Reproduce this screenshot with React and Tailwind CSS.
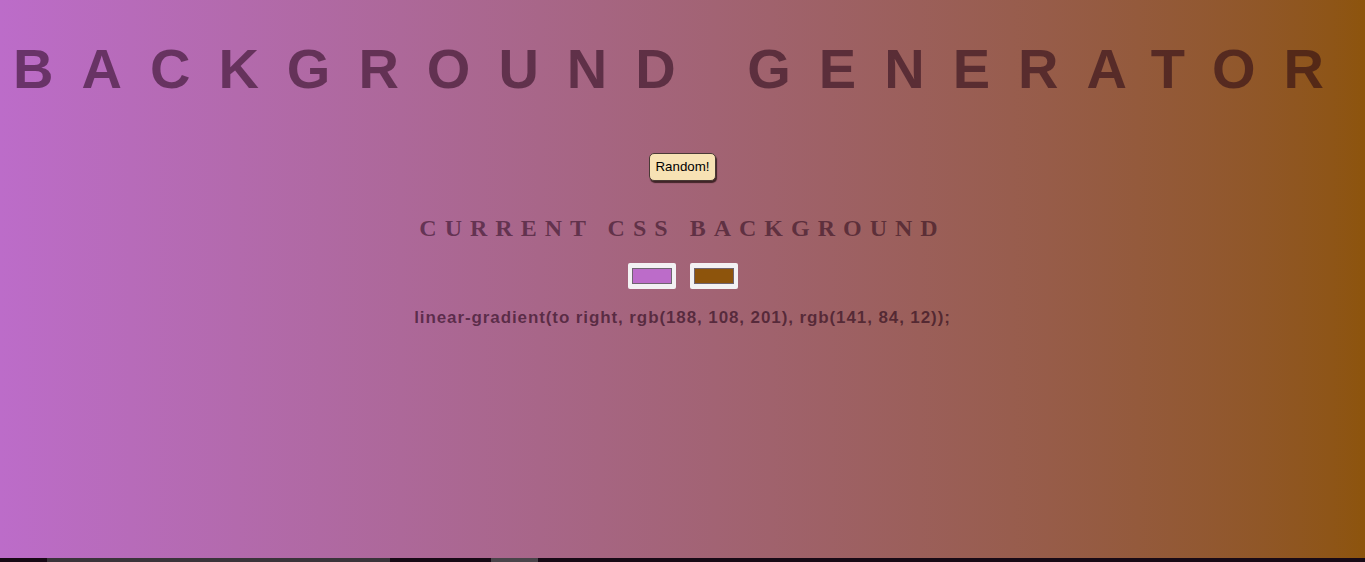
import React from 'react';

const Swatch = ({ color }) => (
  <div className="w-[48px] h-[26px] bg-[#f3f1f3] rounded-[2px] px-[4px] py-[5px]">
    <div className={`w-full h-full border border-[#6f6470] ${color}`} />
  </div>
);

export default function App() {
  return (
    <div className="w-full h-[562px] flex flex-col bg-gradient-to-r from-[rgb(188,108,201)] to-[rgb(141,84,12)] font-['Liberation_Sans',Arial,sans-serif]">
      <main className="flex-1 flex flex-col items-center">
        {/* Title */}
        <h1 className="w-full mt-[37px] text-center text-[56px] leading-[64px] font-bold tracking-[28px] text-[rgba(30,0,20,0.52)]">
          BACKGROUND GENERATOR
        </h1>

        <button className="mt-[52px] h-[28px] px-[6px] rounded-[5px] bg-[#f7e2b4] border border-[#4a3a36] shadow-[1px_2px_1px_rgba(40,20,20,0.8)] text-[13.3px] text-black">
          Random!
        </button>

        <h3 className="mt-[33px] text-[24px] leading-[28px] font-bold tracking-[8px] font-['Liberation_Serif','Times_New_Roman',serif] text-[rgba(30,0,20,0.52)]">
          CURRENT CSS BACKGROUND
        </h3>

        {/* Colour inputs */}
        <div className="mt-[21px] flex gap-[14px]">
          <Swatch color="bg-[rgb(188,108,201)]" />
          <Swatch color="bg-[rgb(141,84,12)]" />
        </div>

        <p className="mt-[19px] text-[17px] leading-[20px] font-bold tracking-[0.9px] text-[rgba(30,0,20,0.58)]">
          linear-gradient(to right, rgb(188, 108, 201), rgb(141, 84, 12));
        </p>
      </main>

      {/* Bottom strip */}
      <div className="h-[4px] flex bg-[#180a16]">
        <div className="w-[47px]" />
        <div className="w-[343px] bg-[#3a343a]" />
        <div className="w-[101px]" />
        <div className="w-[47px] bg-[#4a444a]" />
      </div>
    </div>
  );
}
